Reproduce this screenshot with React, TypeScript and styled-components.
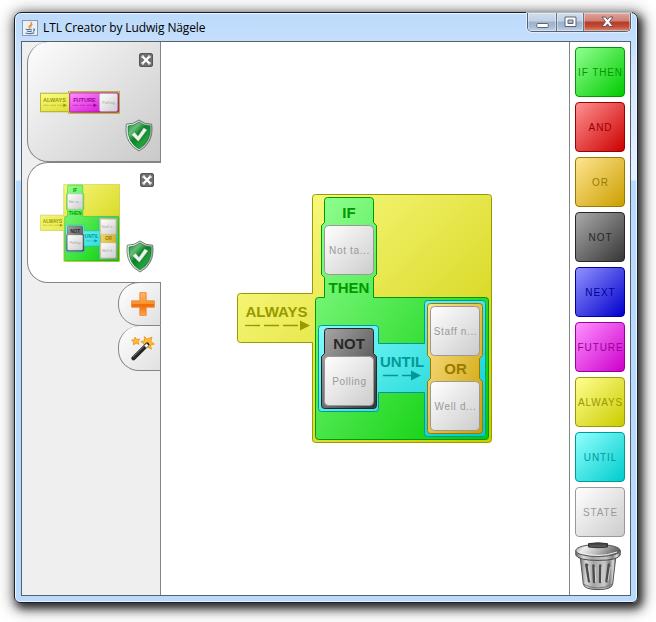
import React from 'react';
import styled, { createGlobalStyle } from 'styled-components';

const GlobalStyle = createGlobalStyle`
  * { box-sizing: border-box; }
  body { margin: 0; background: #fff; font-family: "Liberation Sans", Arial, sans-serif; }
  svg { display: block; flex: none; }
`;

const Desktop = styled.main`
  width: 656px;
  height: 622px;
  padding: 12px 18px 19px 14px;
  overflow: hidden;
  background: #fff;
`;

const WindowFrame = styled.section`
  width: 624px;
  height: 591px;
  padding: 0 6px 6px;
  border: 1px solid #18202b;
  border-radius: 7px 7px 6px 6px;
  display: flex;
  flex-direction: column;
  background: linear-gradient(180deg, #bcdafb 0, #c5dffc 28px, #d4e7fc 60px, #e6f1fe 167px, #b9d9fd 168px, #b9d9fd 100%);
  box-shadow: inset 0 0 0 1px #eaf5ff, 3px 4px 9px 1px rgba(0, 0, 0, 0.75), 2px 3px 15px 4px rgba(0, 0, 0, 0.42);
`;

const TitleBar = styled.header`
  height: 28px;
  flex: none;
  display: flex;
  align-items: flex-start;
`;

const AppTitle = styled.h1`
  margin: 0;
  padding: 6px 0 0 1px;
  flex: 1;
  display: flex;
  align-items: center;
  gap: 5px;
  font: 12px/17px "Open Sans", "Noto Sans", sans-serif;
  letter-spacing: -0.12px;
  color: #000;
`;

const CaptionGroup = styled.div`
  display: flex;
  height: 19px;
  border: 1px solid #536276;
  border-top: 0;
  border-radius: 0 0 5px 5px;
  overflow: hidden;
  box-shadow: 0 0 0 1px rgba(240, 248, 255, 0.7);
`;

const CaptionButton = styled.button<{ $width: number; $danger?: boolean }>`
  width: ${p => p.$width}px;
  padding: 0;
  border: 0;
  border-left: ${p => (p.$width === 28 ? '0' : '1px solid #65758a')};
  display: flex;
  align-items: center;
  justify-content: center;
  box-shadow: inset 0 0 0 1px rgba(255, 255, 255, 0.38);
  background: ${p => p.$danger
    ? 'linear-gradient(#dfa59c 0, #cf7e72 45%, #b53a28 50%, #c24d38 75%, #dc8a73)'
    : 'linear-gradient(#d0dfef 0, #c0d1e4 45%, #9db2ca 50%, #a6bbd2 75%, #bed2e8)'};
`;

const Client = styled.div`
  width: 610px;
  height: 555px;
  border: 1px solid #53626c;
  display: flex;
  background: #fff;
`;

const Sidebar = styled.aside`
  width: 139px;
  display: flex;
  flex-direction: column;
  align-items: flex-end;
  background: #efefef;
`;

const FormulaTab = styled.div<{ $active?: boolean }>`
  width: 134px;
  height: ${p => (p.$active ? 121 : 120)}px;
  padding: ${p => (p.$active ? 10 : 11)}px 7px 9px 12px;
  display: flex;
  justify-content: space-between;
  align-items: center;
  border: 1px solid #858585;
  border-top-width: ${p => (p.$active ? 1 : 0)}px;
  border-right: ${p => (p.$active ? '0' : '1px solid #858585')};
  border-radius: 21px 0 0 21px;
  background: ${p => (p.$active ? '#fff' : 'linear-gradient(135deg, #fdfdfd, #c9c9c9)')};
`;

const TabActions = styled.div`
  height: 100%;
  width: 28px;
  margin-left: -2px;
  display: flex;
  flex-direction: column;
  justify-content: space-between;
  align-items: flex-end;
`;

const CloseButton = styled.button`
  width: 14px;
  height: 14px;
  padding: 0;
  border: 0;
  background: none;
`;

const ToolTab = styled.button<{ $first?: boolean }>`
  width: 43px;
  height: ${p => (p.$first ? 44 : 45)}px;
  margin-top: ${p => (p.$first ? -1 : 0)}px;
  padding: 0 5px 0 0;
  border: 1px solid #858585;
  border-top-width: ${p => (p.$first ? 1 : 0)}px;
  border-radius: 21px 0 0 21px;
  background: linear-gradient(135deg, #fff, #e0e0e0);
  display: flex;
  align-items: center;
  justify-content: flex-end;
`;

const SidebarRest = styled.div`
  flex: 1;
  width: 100%;
  border-right: 1px solid #858585;
`;

const Canvas = styled.section`
  flex: 1;
  min-width: 0;
  background: #fff;
`;

const Palette = styled.nav`
  width: 61px;
  padding: 5px 0 0 5px;
  border-left: 1px solid #858585;
  display: flex;
  flex-direction: column;
  gap: 5px;
`;

const PaletteButton = styled.button<{ $from: string; $to: string; $ink: string }>`
  width: 50px;
  height: 50px;
  flex: none;
  padding: 1px 0 0 1px;
  border: 1px solid ${p => p.$ink};
  border-radius: 4px;
  background: linear-gradient(135deg, ${p => p.$from}, ${p => p.$to});
  color: ${p => p.$ink};
  font: 10px/12px "Liberation Sans", Arial, sans-serif;
  letter-spacing: 0.9px;
  white-space: nowrap;
  display: flex;
  align-items: center;
  justify-content: center;
`;

const BlockLabel = styled.text`
  font: bold 15px "Liberation Sans", Arial, sans-serif;
  text-anchor: middle;
`;

const StateLabel = styled.text`
  font: 10px "Liberation Sans", Arial, sans-serif;
  letter-spacing: 0.65px;
  text-anchor: middle;
  fill: #999;
`;

const palette = [
  { label: 'IF THEN', from: '#91ff91', to: '#00cb00', ink: '#009900' },
  { label: 'AND', from: '#ff9191', to: '#cc0000', ink: '#990000' },
  { label: 'OR', from: '#ffe591', to: '#cb9f00', ink: '#997a00' },
  { label: 'NOT', from: '#aaaaaa', to: '#363636', ink: '#262626' },
  { label: 'NEXT', from: '#9191ff', to: '#0000cc', ink: '#000099' },
  { label: 'FUTURE', from: '#ff91ff', to: '#cc00cc', ink: '#990099' },
  { label: 'ALWAYS', from: '#ffff91', to: '#cbcb00', ink: '#999900' },
  { label: 'UNTIL', from: '#91ffff', to: '#00cccc', ink: '#009999' },
  { label: 'STATE', from: '#ffffff', to: '#cccccc', ink: '#999999' },
];

function Gradient({ id, from, to }: { id: string; from: string; to: string }) {
  return (
    <linearGradient id={id} x1="0" y1="0" x2="1" y2="1">
      <stop stopColor={from} />
      <stop offset="1" stopColor={to} />
    </linearGradient>
  );
}

function StateBlock({ x, y, label }: { x: number; y: number; label: string }) {
  return (
    <g>
      <rect x={x + 0.5} y={y + 0.5} width="49" height="49" rx="4" fill="url(#state)" stroke="#999" />
      <StateLabel x={x + 25.5} y={y + 29}>{label}</StateLabel>
    </g>
  );
}

function Arrow({ x, y, width, color, dash }: { x: number; y: number; width: number; color: string; dash: string }) {
  return (
    <g>
      <path d={`M${x} ${y}H${x + width - 9}`} stroke={color} strokeWidth="1.3" strokeDasharray={dash} />
      <path d={`M${x + width - 10} ${y - 5}L${x + width} ${y}L${x + width - 10} ${y + 5}Z`} fill={color} />
    </g>
  );
}

function Definitions() {
  return (
    <svg width="0" height="0" style={undefined} aria-hidden="true">
      <defs>
        <Gradient id="always" from="#ffff91" to="#cbcb00" />
        <Gradient id="ifthen" from="#91ff91" to="#00cb00" />
        <Gradient id="until" from="#91ffff" to="#00cccc" />
        <Gradient id="not" from="#aaaaaa" to="#363636" />
        <Gradient id="or" from="#ffe591" to="#cb9f00" />
        <Gradient id="future" from="#ff91ff" to="#cc00cc" />
        <Gradient id="state" from="#ffffff" to="#cccccc" />
      </defs>
    </svg>
  );
}

function FormulaBlocks() {
  return (
    <g>
      <path fill="url(#always)" stroke="#999900" d="M315.5 194.5H488.5Q491.5 194.5 491.5 197.5V439.5Q491.5 442.5 488.5 442.5H315.5Q312.5 442.5 312.5 439.5V342.5H240.5Q237.5 342.5 237.5 339.5V296.5Q237.5 293.5 240.5 293.5H312.5V197.5Q312.5 194.5 315.5 194.5Z" />
      <path fill="url(#ifthen)" stroke="#009900" d="M327.5 197.5H370.5Q373.5 197.5 373.5 200.5V222.5L376.5 225.5V274.5L373.5 277.5V297.5H485.5Q488.5 297.5 488.5 300.5V436.5Q488.5 439.5 485.5 439.5H318.5Q315.5 439.5 315.5 436.5V300.5Q315.5 297.5 318.5 297.5H324.5V277.5L321.5 274.5V225.5L324.5 222.5V200.5Q324.5 197.5 327.5 197.5Z" />
      <path fill="url(#until)" stroke="#009999" d="M321.5 325.5H375.5Q378.5 325.5 378.5 328.5V343.5H424.5V303.5Q424.5 300.5 427.5 300.5H482.5Q485.5 300.5 485.5 303.5V433.5Q485.5 436.5 482.5 436.5H427.5Q424.5 436.5 424.5 433.5V392.5H378.5V408.5Q378.5 411.5 375.5 411.5H321.5Q318.5 411.5 318.5 408.5V328.5Q318.5 325.5 321.5 325.5Z" />
      <path fill="url(#not)" stroke="#262626" d="M327.5 328.5H370.5Q373.5 328.5 373.5 331.5V353.5L376.5 356.5V405.5Q376.5 408.5 373.5 408.5H324.5Q321.5 408.5 321.5 405.5V356.5L324.5 353.5V331.5Q324.5 328.5 327.5 328.5Z" />
      <path fill="url(#or)" stroke="#997a00" d="M430.5 303.5H479.5Q482.5 303.5 482.5 306.5V355.5L479.5 358.5V378.5L482.5 381.5V430.5Q482.5 433.5 479.5 433.5H430.5Q427.5 433.5 427.5 430.5V381.5L430.5 378.5V358.5L427.5 355.5V306.5Q427.5 303.5 430.5 303.5Z" />
      <StateBlock x={324} y={225} label="Not ta..." />
      <StateBlock x={324} y={356} label="Polling" />
      <StateBlock x={430} y={306} label="Staff n..." />
      <StateBlock x={430} y={381} label="Well d..." />
      <BlockLabel x="276.5" y="317" fill="#999900">ALWAYS</BlockLabel>
      <BlockLabel x="349" y="218" fill="#009900">IF</BlockLabel>
      <BlockLabel x="349" y="293" fill="#009900">THEN</BlockLabel>
      <BlockLabel x="349" y="349" fill="#262626">NOT</BlockLabel>
      <BlockLabel x="402" y="367" fill="#009999">UNTIL</BlockLabel>
      <BlockLabel x="455.5" y="374" fill="#997a00">OR</BlockLabel>
      <Arrow x={245} y={325.5} width={65} color="#999900" dash="15 4" />
      <Arrow x={383} y={375.5} width={38} color="#009999" dash="15 4" />
    </g>
  );
}

function FutureThumbnail() {
  return (
    <svg width="80" height="23" viewBox="0 0 216 62">
      <path fill="url(#always)" stroke="#999900" strokeWidth="2" d="M1 6H77V1H215V60H77V56H1Z" />
      <rect x="80" y="5" width="132" height="52" rx="3" fill="url(#future)" stroke="#990099" strokeWidth="2" />
      <StateBlock x={160} y={6} label="Polling" />
      <BlockLabel x="39" y="30" fill="#999900">ALWAYS</BlockLabel>
      <BlockLabel x="120" y="30" fill="#990099">FUTURE</BlockLabel>
      <Arrow x={9} y={38.5} width={64} color="#999900" dash="15 4" />
      <Arrow x={88} y={38.5} width={66} color="#990099" dash="15 4" />
    </svg>
  );
}

function CloseIcon() {
  return (
    <svg width="14" height="14" viewBox="0 0 14 14">
      <rect x=".5" y=".5" width="13" height="13" rx="1.5" fill="#707070" stroke="#565656" />
      <path d="M3.8 3.8L10.2 10.2M10.2 3.8L3.8 10.2" stroke="#fff" strokeWidth="2.3" />
      <path d="M3 5V3H5M9 3H11V5M11 9V11H9M5 11H3V9" fill="none" stroke="#fff" strokeWidth="1" />
    </svg>
  );
}

function ShieldIcon() {
  return (
    <svg width="28" height="33" viewBox="0 0 28 33">
      <defs>
        <linearGradient id="shieldGreen" x1="0" y1="0" x2=".9" y2="1">
          <stop stopColor="#168b35" /><stop offset=".28" stopColor="#67bc79" />
          <stop offset=".48" stopColor="#078427" /><stop offset=".78" stopColor="#22a33c" />
          <stop offset="1" stopColor="#046a1c" />
        </linearGradient>
        <linearGradient id="shieldEdge" x1="0" x2="1">
          <stop stopColor="#fafafa" /><stop offset="1" stopColor="#a2aaa4" />
        </linearGradient>
      </defs>
      <path d="M14 1Q19.5 5.4 26.7 5.2Q28 15 24.2 22.2Q20.8 28.6 14 32Q7.2 28.6 3.8 22.2Q0 15 1.3 5.2Q8.5 5.4 14 1Z" fill="url(#shieldEdge)" stroke="#5f7565" strokeWidth=".9" />
      <path d="M14 3.1Q19 6.9 25 7Q25.7 15.6 22.5 21.4Q19.4 26.9 14 29.8Q8.6 26.9 5.5 21.4Q2.3 15.6 3 7Q9 6.9 14 3.1Z" fill="url(#shieldGreen)" stroke="#087027" strokeWidth=".6" />
      <path d="M7 16.7L9.6 14.5L13 18.4L19.2 10L22 11.9L13.4 23.3Z" fill="#064d19" opacity=".45" />
      <path d="M6.8 15.8L9.5 13.6L13 17.4L18.8 9L21.8 11L13.3 22.2Z" fill="#f0f0ec" stroke="#c9d5c9" strokeWidth=".5" />
    </svg>
  );
}

function PlusIcon() {
  return (
    <svg width="24" height="24" viewBox="0 0 24 24">
      <defs>
        <linearGradient id="plusOrange" x1="0" y1="0" x2="0" y2="1">
          <stop stopColor="#ffb76b" /><stop offset=".48" stopColor="#f79332" />
          <stop offset=".53" stopColor="#ee6907" /><stop offset="1" stopColor="#ffa746" />
        </linearGradient>
      </defs>
      <path d="M8.8.6H15.2V8.8H23.4V15.2H15.2V23.4H8.8V15.2H.6V8.8H8.8Z" fill="url(#plusOrange)" stroke="#ed8126" strokeWidth=".8" />
    </svg>
  );
}

function WandIcon() {
  return (
    <svg width="24" height="25" viewBox="0 0 24 25">
      <g fill="#ffbd32" stroke="#ec8d18" strokeWidth=".8" strokeLinejoin="round">
        <path d="M4 1.2L5.8 3.5L8.7 3L7.1 5.5L8 8.3L5.2 7.2L2.5 8.8L2.7 5.8L.5 4.2L3.3 3.7Z" />
        <path d="M13.2.6L16.2 3L21 1.1L19.8 5.5L23.4 8L19.5 9.2L20.4 13.2L16.5 10.9L13.2 12L13.1 8L9.8 5.5L13.6 4.7Z" />
      </g>
      <path d="M2.5 22.2L16.3 8.6" stroke="#252525" strokeWidth="4.2" strokeLinecap="round" />
      <path d="M2 21.2L14.5 8.8" stroke="#777" strokeWidth="1" />
      <path d="M13.4 9.8L15.5 7.6L17.5 9.5L15.4 11.7Z" fill="#fff" stroke="#999" strokeWidth=".5" />
    </svg>
  );
}

function TrashIcon() {
  return (
    <svg width="46" height="49" viewBox="0 0 46 49">
      <defs>
        <linearGradient id="trashMetal" x1="0" x2="1">
          <stop stopColor="#727272" /><stop offset=".17" stopColor="#d8d8d8" />
          <stop offset=".38" stopColor="#a4a4a4" /><stop offset=".68" stopColor="#c9c9c9" />
          <stop offset=".83" stopColor="#858585" /><stop offset=".92" stopColor="#dddddd" />
          <stop offset="1" stopColor="#686868" />
        </linearGradient>
        <linearGradient id="trashLid" x1="0" y1="0" x2="1" y2=".25">
          <stop stopColor="#8a8a8a" /><stop offset=".25" stopColor="#eeeeee" />
          <stop offset=".6" stopColor="#b9b9b9" /><stop offset="1" stopColor="#656565" />
        </linearGradient>
      </defs>
      <path d="M5 13L8.3 42Q9 47.6 23 47.6Q37 47.6 37.7 42L41 13Z" fill="url(#trashMetal)" stroke="#555" />
      <path d="M8 42Q22 50 38 42" fill="none" stroke="#777" />
      <path d="M12.2 23Q10.5 21.4 11.7 25L14 39.2M18.4 23.5L19 40M25.2 23.5L25 40M33.8 22.5L31.5 39.2" fill="none" stroke="#4c4c4c" strokeWidth="2.4" strokeLinecap="round" />
      <path d="M13.6 25L15.4 39M20.2 25L20.7 40M27 25L26.5 40M35.3 25L33 39" fill="none" stroke="#dedede" strokeWidth=".8" />
      <path d="M.8 8.5V13Q3 18.4 23 18.4Q43 18.4 45.2 13V8.5Z" fill="url(#trashMetal)" stroke="#4c4c4c" />
      <ellipse cx="23" cy="8.5" rx="22.2" ry="6.1" fill="url(#trashLid)" stroke="#555" />
      <path d="M4 10Q23 17 42 10" fill="none" stroke="#eee" />
      <path d="M13.5 5V1.6Q23 .1 32.5 1.6V5Q23 6.5 13.5 5Z" fill="#454545" stroke="#343434" />
      <path d="M15 4H31" stroke="#686868" />
    </svg>
  );
}

function JavaIcon() {
  return (
    <svg width="16" height="16" viewBox="0 0 16 16">
      <rect x=".5" y=".5" width="15" height="15" fill="#eaf0f6" stroke="#899bb0" />
      <path d="M8.5 2Q10.8 4 7.8 5.8Q6 7 8 8.4M10.5 4.3Q7.8 5.5 9.2 7.3" fill="none" stroke="#e58b2f" strokeWidth="1.25" />
      <path d="M4.5 8.9Q3 10 9.7 9.2M5 11Q7 12 10 11M3.5 13Q8 14.4 12.4 12.8M11 9Q14 8.8 11.3 11.5" fill="none" stroke="#4e7599" strokeWidth="1.1" />
    </svg>
  );
}

export default function App() {
  return (
    <Desktop>
      <GlobalStyle />
      <WindowFrame>
        <TitleBar>
          <AppTitle><JavaIcon />LTL Creator by Ludwig Nägele</AppTitle>
          <CaptionGroup>
            <CaptionButton $width={28} aria-label="Minimize">
              <svg width="13" height="15" viewBox="0 0 13 15"><rect x=".8" y="8.5" width="11.4" height="4" rx=".8" fill="#fff" stroke="#596373" /></svg>
            </CaptionButton>
            <CaptionButton $width={27} aria-label="Maximize">
              <svg width="13" height="12" viewBox="0 0 13 12"><path fillRule="evenodd" d="M1 1H12V10.5H1ZM4 4V7.5H9V4Z" fill="#fff" stroke="#596373" /></svg>
            </CaptionButton>
            <CaptionButton $width={47} $danger aria-label="Close">
              <svg width="13" height="12" viewBox="0 0 13 12"><path d="M1 1H4.4L6.5 3.6L8.6 1H12L8.5 5.7L12 10.5H8.6L6.5 7.9L4.4 10.5H1L4.5 5.7Z" fill="#fff" stroke="#695563" /></svg>
            </CaptionButton>
          </CaptionGroup>
        </TitleBar>
        <Client>
          <Sidebar>
            <FormulaTab>
              <FutureThumbnail />
              <TabActions><CloseButton aria-label="Close formula"><CloseIcon /></CloseButton><ShieldIcon /></TabActions>
            </FormulaTab>
            <FormulaTab $active>
              <svg width="80" height="78" viewBox="237 194 255 249"><FormulaBlocks /></svg>
              <TabActions><CloseButton aria-label="Close formula"><CloseIcon /></CloseButton><ShieldIcon /></TabActions>
            </FormulaTab>
            <ToolTab $first aria-label="Add formula"><PlusIcon /></ToolTab>
            <ToolTab aria-label="Formula wizard"><WandIcon /></ToolTab>
            <SidebarRest />
          </Sidebar>
          <Canvas>
            <svg width="408" height="553" viewBox="161 42 408 553"><Definitions /><FormulaBlocks /></svg>
          </Canvas>
          <Palette>
            {palette.map(item => (
              <PaletteButton key={item.label} $from={item.from} $to={item.to} $ink={item.ink}>{item.label}</PaletteButton>
            ))}
            <TrashIcon />
          </Palette>
        </Client>
      </WindowFrame>
    </Desktop>
  );
}
